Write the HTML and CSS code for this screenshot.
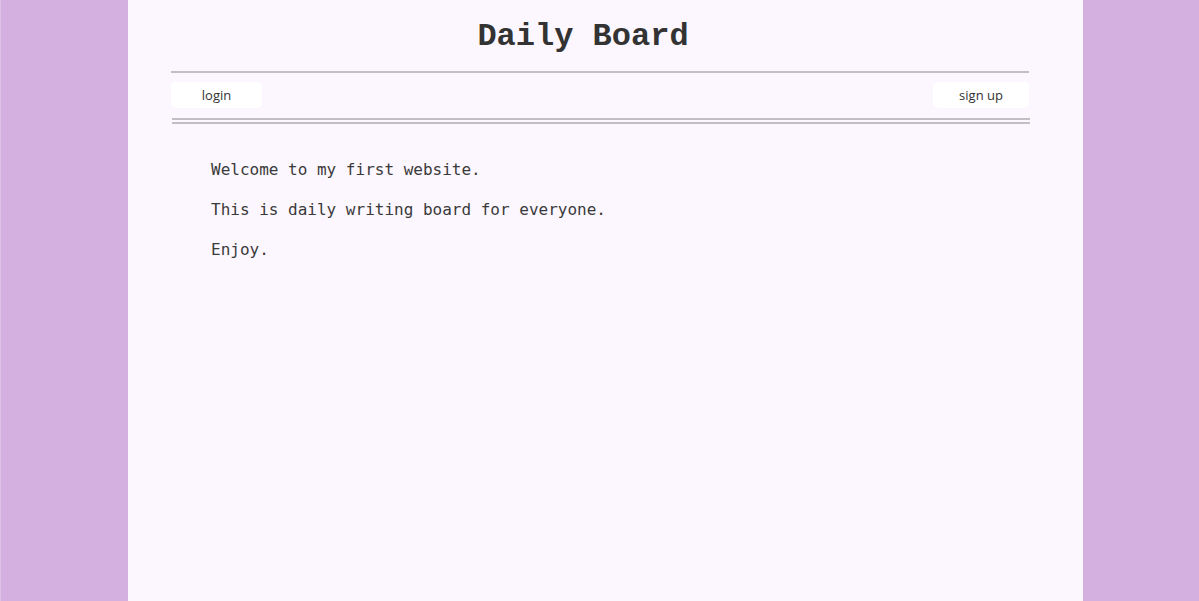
FILE: index.html
```html
<!DOCTYPE html>
<html lang="en">
<head>
<meta charset="utf-8">
<title>Daily Board</title>
<link rel="stylesheet" href="styles.css">
</head>
<body>
<div class="page">
  <h1 class="title">Daily Board</h1>
  <nav class="nav">
    <a class="btn btn-login" href="#">login</a>
    <a class="btn btn-signup" href="#">sign up</a>
  </nav>
  <main class="content">
    <p>Welcome to my first website.</p>
    <p>This is daily writing board for everyone.</p>
    <p>Enjoy.</p>
  </main>
</div>
</body>
</html>
```
FILE: styles.css
```css
html, body {
  margin: 0;
  padding: 0;
  height: 100%;
}
body {
  background: #d4b0e0;
  display: flex;
  border-left: 1px solid #dcc0e6;
  box-sizing: border-box;
}
.page {
  margin-left: 127px;
  width: 955px;
  min-height: 601px;
  background: #fcf7fe;
  display: flex;
  flex-direction: column;
}
.title {
  margin: 0;
  padding: 19px 45px 0 0;
  height: 54px;
  box-sizing: border-box;
  font-family: "Liberation Mono", "Courier New", monospace;
  font-weight: bold;
  font-size: 32px;
  line-height: 36px;
  color: #333;
  text-align: center;
}
.nav {
  margin: 17px 54px 0 43px;
  border-top: 2px solid #c3bec4;
  padding: 9px 0 10px;
  display: flex;
  justify-content: space-between;
  position: relative;
}
.nav::after {
  content: "";
  position: absolute;
  left: 1px;
  right: -1px;
  bottom: -6px;
  height: 2px;
  border-top: 2px solid #c3bec4;
  border-bottom: 2px solid #c3bec4;
  box-sizing: content-box;
}
.btn {
  display: flex;
  align-items: center;
  justify-content: center;
  height: 26px;
  background: #ffffff;
  border-radius: 5px;
  font-family: "Open Sans", "Noto Sans", sans-serif;
  font-size: 13px;
  color: #333;
  text-decoration: none;
}
.btn-login { width: 91px; }
.btn-signup { width: 96px; }
.content {
  padding: 40px 0 0 83px;
}
.content p {
  margin: 0 0 16px;
  font-family: "DejaVu Sans Mono", monospace;
  font-size: 16px;
  line-height: 24px;
  color: #3a3a3a;
}
```
